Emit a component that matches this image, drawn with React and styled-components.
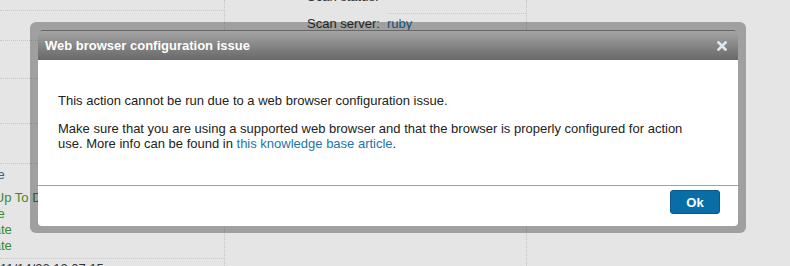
import React from "react";
import styled, { createGlobalStyle } from "styled-components";

const GlobalStyle = createGlobalStyle`
  html, body {
    margin: 0;
    padding: 0;
    background: #e5e5e5;
    font-family: "Liberation Sans", Arial, sans-serif;
    font-size: 13px;
  }
`;

const Page = styled.div`
  position: relative;
  width: 790px;
  height: 266px;
  overflow: hidden;
  background: #e5e5e5;
  display: grid;
  grid-template-columns: 225px 302px 1fr;
`;

const Column = styled.div`
  border-right: ${(p) => (p.$divider ? "1px dotted #c4c4c4" : "none")};
  overflow: hidden;
`;

const Row = styled.div`
  height: ${(p) => p.$h}px;
  padding-top: ${(p) => p.$pad || 0}px;
  border-bottom: ${(p) => (p.$line ? "1px dotted #c8c8c8" : "none")};
  box-sizing: border-box;
`;

const Status = styled.div`
  white-space: nowrap;
  line-height: 16px;
  margin-left: ${(p) => p.$shift}px;
  color: ${(p) => p.$color || "#3b8a2c"};
`;

const Info = styled.div`
  display: grid;
  grid-template-columns: 80px 1fr;
  margin-left: 82px;
  margin-top: -12px;
`;

const InfoLabel = styled.div`
  color: #333;
  height: ${(p) => p.$h}px;
  line-height: ${(p) => p.$lh}px;
`;

const InfoValue = styled.div`
  color: ${(p) => p.$color || "#999"};
  height: ${(p) => p.$h}px;
  line-height: ${(p) => p.$lh}px;
  border-bottom: ${(p) => (p.$line ? "1px dotted #c8c8c8" : "none")};
  box-sizing: border-box;
`;

const Frame = styled.div`
  position: absolute;
  left: 30px;
  top: 22px;
  width: 716px;
  height: 211px;
  box-sizing: border-box;
  padding: 8px 8px 7px;
  background: rgba(0, 0, 0, 0.3);
  border-radius: 6px;
`;

const Dialog = styled.div`
  height: 100%;
  background: #fff;
  border-radius: 4px;
  display: flex;
  flex-direction: column;
  overflow: hidden;
`;

const TitleBar = styled.div`
  height: 30px;
  box-sizing: border-box;
  border-top: 1px solid #666;
  background: linear-gradient(#a4a4a4, #686868);
  display: flex;
  align-items: center;
  justify-content: space-between;
  padding: 0 11px 0 7px;
  border-radius: 4px 4px 0 0;
`;

const Title = styled.div`
  color: #fff;
  font-weight: bold;
  font-size: 13px;
`;

const Close = styled.button`
  border: 0;
  background: none;
  padding: 0;
  width: 10px;
  height: 10px;
  display: flex;
  cursor: pointer;
`;

const Body = styled.div`
  height: 126px;
  box-sizing: border-box;
  padding: 33px 30px 0 20px;
  color: #222;
  line-height: 15px;
  border-bottom: 1px solid #a0a0a0;
`;

const Para = styled.p`
  margin: 0 0 13px;
`;

const Link = styled.a`
  color: #1b76aa;
  text-decoration: none;
`;

const Footer = styled.div`
  flex: 1;
  display: flex;
  justify-content: flex-end;
  align-items: flex-start;
  padding: 4px 18px 0;
`;

const Button = styled.button`
  width: 50px;
  height: 24px;
  background: #0a6ea6;
  border: 1px solid #08598a;
  border-radius: 3px;
  color: #fff;
  font-family: "Liberation Sans", Arial, sans-serif;
  font-weight: bold;
  font-size: 13px;
  padding: 0;
`;

const StatusList = styled.div`
  padding-top: 3px;
  display: flex;
  flex-direction: column;
`;

export default function App() {
  return (
    <>
      <GlobalStyle />
      <Page>
        <Column $divider>
          <Row $h={11} $line />
          <Row $h={30} $line />
          <Row $h={38} $line />
          <Row $h={45} $line />
          <Row $h={40} $line />
          <Row $h={95} $line>
            <StatusList>
              <Status $shift={-40} $color="#3f5f7c">Inactive</Status>
              <Status $shift={-29} style={{ marginTop: 7 }}>Not Up To Date</Status>
              <Status $shift={-40}>Inactive</Status>
              <Status $shift={-53}>Up To Date</Status>
              <Status $shift={-53}>Up To Date</Status>
            </StatusList>
          </Row>
          <Row $h={10} $pad={2}>
            <Status $shift={0} $color="#333">11/14/22 12:07:15</Status>
          </Row>
        </Column>
        <Column $divider>
          <Info>
            <InfoLabel $h={26} $lh={18}>Scan status:</InfoLabel>
            <InfoValue $h={26} $lh={18} $line>---</InfoValue>
            <InfoLabel $h={20} $lh={20}>Scan server:</InfoLabel>
            <InfoValue $h={20} $lh={20} $color="#1b76aa">ruby</InfoValue>
          </Info>
        </Column>
        <Column />
        <Frame>
          <Dialog>
            <TitleBar>
              <Title>Web browser configuration issue</Title>
              <Close aria-label="Close">
                <svg width="10" height="10" viewBox="0 0 10 10">
                  <path d="M1.5 1.5 L8.5 8.5 M8.5 1.5 L1.5 8.5" stroke="#dfe7f1" strokeWidth="2.6" strokeLinecap="square" />
                </svg>
              </Close>
            </TitleBar>
            <Body>
              <Para>This action cannot be run due to a web browser configuration issue.</Para>
              <Para>
                Make sure that you are using a supported web browser and that the browser is properly configured for action
                use. More info can be found in <Link href="#">this knowledge base article</Link>.
              </Para>
            </Body>
            <Footer>
              <Button>Ok</Button>
            </Footer>
          </Dialog>
        </Frame>
      </Page>
    </>
  );
}
